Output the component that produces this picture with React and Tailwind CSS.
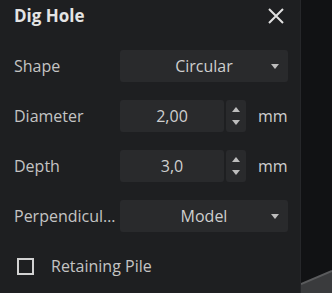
import React from 'react';

/**
 * Small down/up caret used by selects and spinners
 */
function Caret({ up = false, className = '' }) {
  return (
    <svg width="8" height="5" viewBox="0 0 8 5" className={className}>
      {up ? (
        <path d="M0 5 L4 0 L8 5 Z" fill="#bdbdbd" />
      ) : (
        <path d="M0 0 L8 0 L4 5 Z" fill="#bdbdbd" />
      )}
    </svg>
  );
}

function Select({ value }) {
  return (
    <div className="relative flex h-[32px] w-[168px] items-center justify-center rounded-[3px] bg-[#292a2c] text-[#cfcfcf]">
      <span>{value}</span>
      <Caret className="absolute right-[9px] top-[14px]" />
    </div>
  );
}

function NumberField({ value, unit }) {
  return (
    <div className="flex h-[32px] items-center">
      <div className="flex h-full w-[104px] items-center justify-center rounded-[3px] bg-[#292a2c] text-[#cfcfcf]">
        {value}
      </div>
      <div className="ml-[2px] flex h-full w-[20px] flex-col items-center justify-between rounded-[3px] bg-[#292a2c] py-[7px]">
        <Caret up />
        <Caret />
      </div>
      <span className="ml-[12px] text-[#cfcfcf]">{unit}</span>
    </div>
  );
}

function Row({ label, children }) {
  return (
    <div className="flex h-[32px] items-center">
      <div className="w-[106px] truncate pr-[2px] text-[#c4c4c4]">{label}</div>
      {children}
    </div>
  );
}

export default function App() {
  return (
    <div
      className="relative flex h-[293px] w-[332px] overflow-hidden bg-[#111214] text-[16px]"
      style={{ fontFamily: '"Open Sans", "Liberation Sans", sans-serif' }}
    >
      {/* Dig Hole panel */}
      <div className="flex h-full w-[301px] flex-col border-r border-[#26272a] bg-[#1e1f21] pl-[14px] pr-[12px]">
        <div className="flex h-[32px] items-center justify-between">
          <h1 className="text-[17px] font-bold text-[#e4e4e4]">Dig Hole</h1>
          <svg width="16" height="16" viewBox="0 0 16 16" className="mr-[4px]">
            <path d="M1 1 L15 15 M15 1 L1 15" stroke="#e0e0e0" strokeWidth="2" />
          </svg>
        </div>

        <div className="mt-[18px] flex flex-col gap-[18px]">
          <Row label="Shape">
            <Select value="Circular" />
          </Row>
          <Row label="Diameter">
            <NumberField value="2,00" unit="mm" />
          </Row>
          <Row label="Depth">
            <NumberField value="3,0" unit="mm" />
          </Row>
          <Row label="Perpendicular">
            <Select value="Model" />
          </Row>
          <div className="flex h-[32px] items-center">
            <div className="ml-[3px] h-[17px] w-[17px] border-2 border-[#d2d2d2]" />
            <span className="ml-[17px] text-[#c4c4c4]">Retaining Pile</span>
          </div>
        </div>
      </div>

      {/* viewport edge */}
      <svg className="absolute bottom-0 right-0" width="31" height="25" viewBox="0 0 31 25">
        <path d="M0 16 L31 3 L31 25 L0 25 Z" fill="#3a3b3d" />
        <path d="M0 16 L31 3" stroke="#5a5b5d" strokeWidth="2" />
      </svg>
    </div>
  );
}
